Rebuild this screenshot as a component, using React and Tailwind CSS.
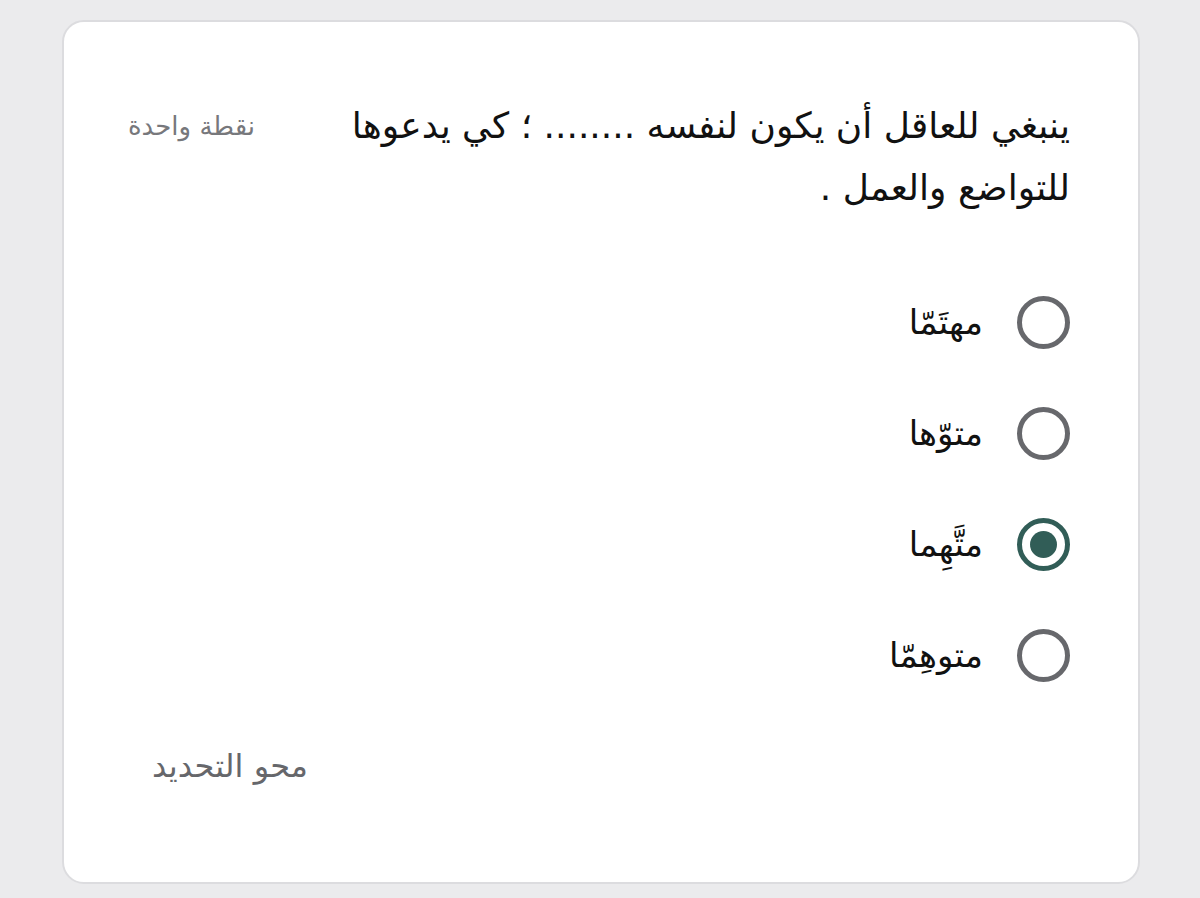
import React, { useState } from 'react';

const options = ['مهتَمّا', 'متوّها', 'متَّهِما', 'متوهِمّا'];

const Radio = ({ checked }) => (
  <span
    className={`flex items-center justify-center w-[53px] h-[53px] rounded-full border-[5px] shrink-0 ${
      checked ? 'border-[#315d57]' : 'border-[#67686c]'
    }`}
  >
    {checked && <span className="w-[27px] h-[27px] rounded-full bg-[#315d57]" />}
  </span>
);

export default function App() {
  const [selected, setSelected] = useState(2);

  return (
    <div
      dir="rtl"
      className="w-[1200px] h-[898px] bg-[#ebebed] pt-[20px] pl-[62px] pr-[60px]"
      style={{ fontFamily: '"DejaVu Sans", "Noto Sans", sans-serif' }}
    >
      <div className="h-[864px] bg-white rounded-[22px] border-2 border-[#dcdcdf] pr-[68px] pl-[64px] pt-[73px]">
        {/* Question header */}
        <div className="flex items-start justify-between">
          <p className="text-[36px] leading-[62px] text-[#111] w-[740px]">
            ينبغي للعاقل أن يكون لنفسه ........ ؛ كي يدعوها للتواضع والعمل .
          </p>
          <span className="text-[26px] leading-[62px] text-[#77787c]">نقطة واحدة</span>
        </div>

        {/* Options */}
        <div className="flex flex-col gap-[58px] mt-[77px]">
          {options.map((opt, i) => (
            <button
              key={i}
              type="button"
              onClick={() => setSelected(i)}
              className="flex items-center gap-[34px] h-[53px] text-right"
            >
              <Radio checked={selected === i} />
              <span className="text-[34px] text-[#111]">{opt}</span>
            </button>
          ))}
        </div>

        <div className="flex justify-end mt-[62px]">
          <button
            type="button"
            onClick={() => setSelected(null)}
            className="text-[32px] leading-[45px] text-[#66676b] ml-[24px]"
          >
            محو التحديد
          </button>
        </div>
      </div>
    </div>
  );
}
